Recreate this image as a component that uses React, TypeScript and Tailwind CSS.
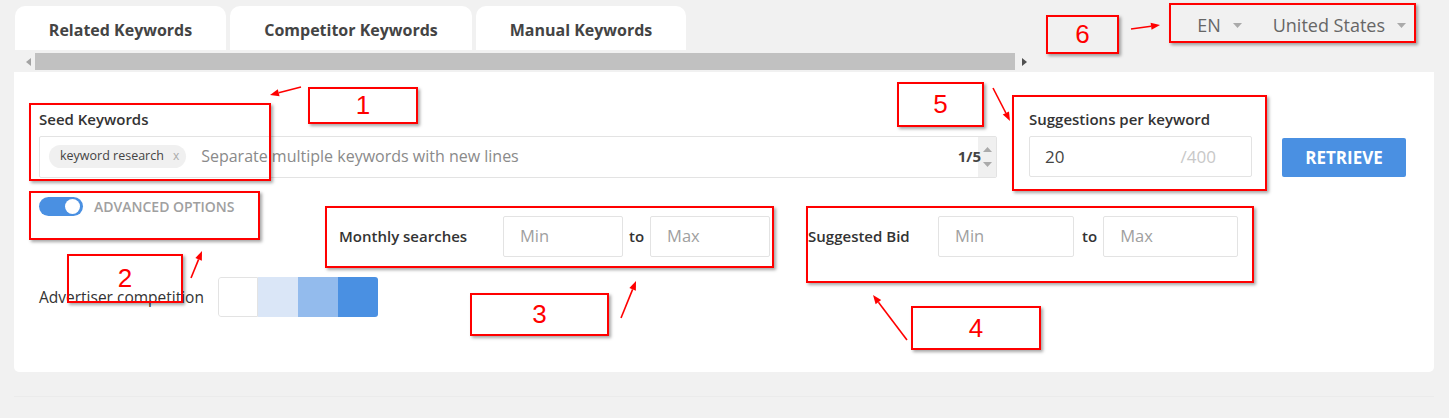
import React from "react";

const Caret = () => (
  <svg width="9" height="5" viewBox="0 0 9 5" className="ml-[12px]">
    <path d="M0 0 L9 0 L4.5 5 Z" fill="#aaaaaa" />
  </svg>
);

const Box = ({ x, y, w, h, label }: { x: number; y: number; w: number; h: number; label?: string }) => (
  <div
    className="absolute border-2 border-[#ff0000] shadow-[2px_2px_3px_rgba(0,0,0,0.35)] flex items-center justify-center text-[#ff0000] text-[26px] font-['Liberation_Sans',Arial,sans-serif]"
    style={{ left: x, top: y, width: w, height: h }}
  >
    {label}
  </div>
);

const Arrow = ({ x1, y1, x2, y2 }: { x1: number; y1: number; x2: number; y2: number }) => {
  const ang = Math.atan2(y2 - y1, x2 - x1);
  const L = 9;
  const W = 3.5;
  const bx = x2 - L * Math.cos(ang);
  const by = y2 - L * Math.sin(ang);
  const px = -Math.sin(ang) * W;
  const py = Math.cos(ang) * W;
  return (
    <g>
      <line x1={x1} y1={y1} x2={bx} y2={by} stroke="#ff0000" strokeWidth="1.6" />
      <polygon points={`${x2},${y2} ${bx + px},${by + py} ${bx - px},${by - py}`} fill="#ff0000" />
    </g>
  );
};

const Input = ({ w, placeholder }: { w: string; placeholder: string }) => (
  <div className={`${w} h-[41px] border border-[#e3e3e3] rounded-[2px] flex items-center pl-[16px] text-[16.5px] text-[#a0a0a0]`}>
    {placeholder}
  </div>
);

export default function App() {
  return (
    <div className="relative w-full h-[418px] bg-[#f1f1f1] overflow-hidden font-['Open_Sans','Liberation_Sans',sans-serif]">
      {/* header */}
      <div className="flex h-[72px]">
        <div className="flex flex-col pl-[15px]">
          <div className="flex gap-[4px] pt-[6px] h-[50px]">
            <div className="w-[211px] h-[44px] pt-[4px] bg-white rounded-t-[10px] flex items-center justify-center text-[16px] font-bold text-[#444]">
              Related Keywords
            </div>
            <div className="w-[242px] h-[44px] pt-[4px] bg-white rounded-t-[10px] flex items-center justify-center text-[16px] font-bold text-[#444]">
              Competitor Keywords
            </div>
            <div className="w-[210px] h-[44px] pt-[4px] bg-white rounded-t-[10px] flex items-center justify-center text-[16px] font-bold text-[#444]">
              Manual Keywords
            </div>
          </div>
          <div className="mt-[3px] h-[17px] w-[1016px] flex items-center">
            <div className="w-[20px] flex justify-center pl-[6px]">
              <svg width="5" height="8" viewBox="0 0 5 8">
                <path d="M5 0 L5 8 L0 4 Z" fill="#a3a3a3" />
              </svg>
            </div>
            <div className="w-[980px] h-[17px] bg-[#c1c1c1]" />
            <div className="flex-1 flex justify-center pl-[2px]">
              <svg width="5" height="8" viewBox="0 0 5 8">
                <path d="M0 0 L0 8 L5 4 Z" fill="#505050" />
              </svg>
            </div>
          </div>
        </div>
        <div className="flex-1 flex justify-end pr-[43px] pt-[12px]">
          <div className="flex items-start h-[26px] text-[18px] text-[#666]">
            <div className="flex items-center">
              <span>EN</span>
              <Caret />
            </div>
            <div className="flex items-center ml-[31px]">
              <span>United States</span>
              <Caret />
            </div>
          </div>
        </div>
      </div>

      {/* panel */}
      <div className="mx-[14px] mr-[15px] h-[300px] bg-white rounded-b-[5px] pl-[25px] pt-[37px]">
        {/* row 1 */}
        <div className="flex items-start">
          <div className="flex flex-col w-[958px]">
            <div className="text-[15px] font-semibold text-[#333] h-[20px] leading-[20px] mt-[0px]">Seed Keywords</div>
            <div className="mt-[7px] h-[42px] border border-[#e3e3e3] rounded-[2px] flex items-center pl-[9px] pb-[2px]">
              <div className="h-[23px] rounded-full bg-[#f0f0f0] flex items-center pl-[11px] pr-[7px] text-[12.5px] text-[#444]">
                keyword research
                <span className="ml-[9px] text-[#aaa] text-[12px]">x</span>
              </div>
              <span className="ml-[15px] text-[16px] text-[#8a8a8a]">Separate multiple keywords with new lines</span>
              <span className="ml-auto text-[15px] font-bold text-[#444] -mr-[3px] relative">1/5</span>
              <div className="w-[18px] h-[40px] bg-[#f0f0f0] flex flex-col items-center justify-center gap-[10px] mt-[2px]">
                <svg width="9" height="5" viewBox="0 0 9 5">
                  <path d="M0 5 L9 5 L4.5 0 Z" fill="#aaa" />
                </svg>
                <svg width="9" height="5" viewBox="0 0 9 5">
                  <path d="M0 0 L9 0 L4.5 5 Z" fill="#aaa" />
                </svg>
              </div>
            </div>
          </div>
          <div className="flex flex-col w-[223px] ml-[32px]">
            <div className="text-[15px] font-semibold text-[#333] h-[20px] leading-[20px]">Suggestions per keyword</div>
            <div className="mt-[7px] h-[41px] border border-[#e3e3e3] rounded-[2px] flex items-center pl-[15px] pr-[35px] text-[17px]">
              <span className="text-[#444]">20</span>
              <span className="ml-auto text-[#c8c8c8]">/400</span>
            </div>
          </div>
          <div className="ml-[30px] mt-[29px] w-[124px] h-[39px] bg-[#4a90e2] rounded-[2px] flex items-center justify-center text-white text-[17px] font-bold">
            RETRIEVE
          </div>
        </div>

        {/* row 2 */}
        <div className="flex items-start mt-[18px]">
          <div className="flex items-center w-[300px]">
            <div className="w-[44px] h-[19px] rounded-full bg-[#4a90e2] flex items-center justify-end pr-[3px]">
              <div className="w-[15px] h-[15px] rounded-full bg-white" />
            </div>
            <span className="ml-[11px] text-[14px] font-semibold text-[#a0a0a0]">ADVANCED OPTIONS</span>
          </div>
          <div className="flex items-center mt-[20px]">
            <span className="text-[15px] font-semibold text-[#333] w-[164px]">Monthly searches</span>
            <Input w="w-[120px]" placeholder="Min" />
            <span className="text-[15px] font-semibold text-[#333] mx-[6px]">to</span>
            <Input w="w-[120px]" placeholder="Max" />
          </div>
          <div className="flex items-center mt-[20px] ml-[38px]">
            <span className="text-[15px] font-semibold text-[#333] w-[130px]">Suggested Bid</span>
            <Input w="w-[136px]" placeholder="Min" />
            <span className="text-[15px] font-semibold text-[#333] ml-[8px] mr-[6px]">to</span>
            <Input w="w-[135px]" placeholder="Max" />
          </div>
        </div>

        {/* row 3 */}
        <div className="flex items-center mt-[20px]">
          <span className="text-[15.5px] text-[#333] w-[179px] pt-[2px]">Advertiser competition</span>
          <div className="flex h-[40px] rounded-[3px] overflow-hidden">
            <div className="w-[40px] h-full border border-[#e3e3e3] rounded-l-[3px] bg-white" />
            <div className="w-[40px] h-full bg-[#dae6f7]" />
            <div className="w-[40px] h-full bg-[#93bbed]" />
            <div className="w-[40px] h-full bg-[#4a90e2]" />
          </div>
        </div>
      </div>

      <div className="mx-[14px] mr-[15px] mt-[24px] h-px bg-[#ebebeb]" />

      {/* annotations overlay */}
      <div className="absolute inset-0 pointer-events-none">
        <Box x={1046} y={15} w={73} h={39} label="6" />
        <Box x={1169} y={3} w={247} h={40} />
        <Box x={29} y={103} w={242} h={78} />
        <Box x={308} y={87} w={110} h={37} label="1" />
        <Box x={897} y={82} w={87} h={45} label="5" />
        <Box x={1012} y={95} w={255} h={96} />
        <Box x={29} y={191} w={231} h={49} />
        <Box x={67} y={254} w={116} h={49} label="2" />
        <Box x={325} y={206} w={449} h={62} />
        <Box x={470} y={293} w={139} h={43} label="3" />
        <Box x={806} y={206} w={448} h={77} />
        <Box x={911} y={306} w={130} h={44} label="4" />
        <svg className="absolute inset-0" width="1449" height="418">
          <Arrow x1={1131} y1={29} x2={1160} y2={25} />
          <Arrow x1={301} y1={87} x2={270} y2={95} />
          <Arrow x1={993} y1={88} x2={1010} y2={121} />
          <Arrow x1={191} y1={278} x2={202} y2={251} />
          <Arrow x1={621} y1={318} x2={636} y2={281} />
          <Arrow x1={907} y1={340} x2={873} y2={295} />
        </svg>
      </div>
    </div>
  );
}
